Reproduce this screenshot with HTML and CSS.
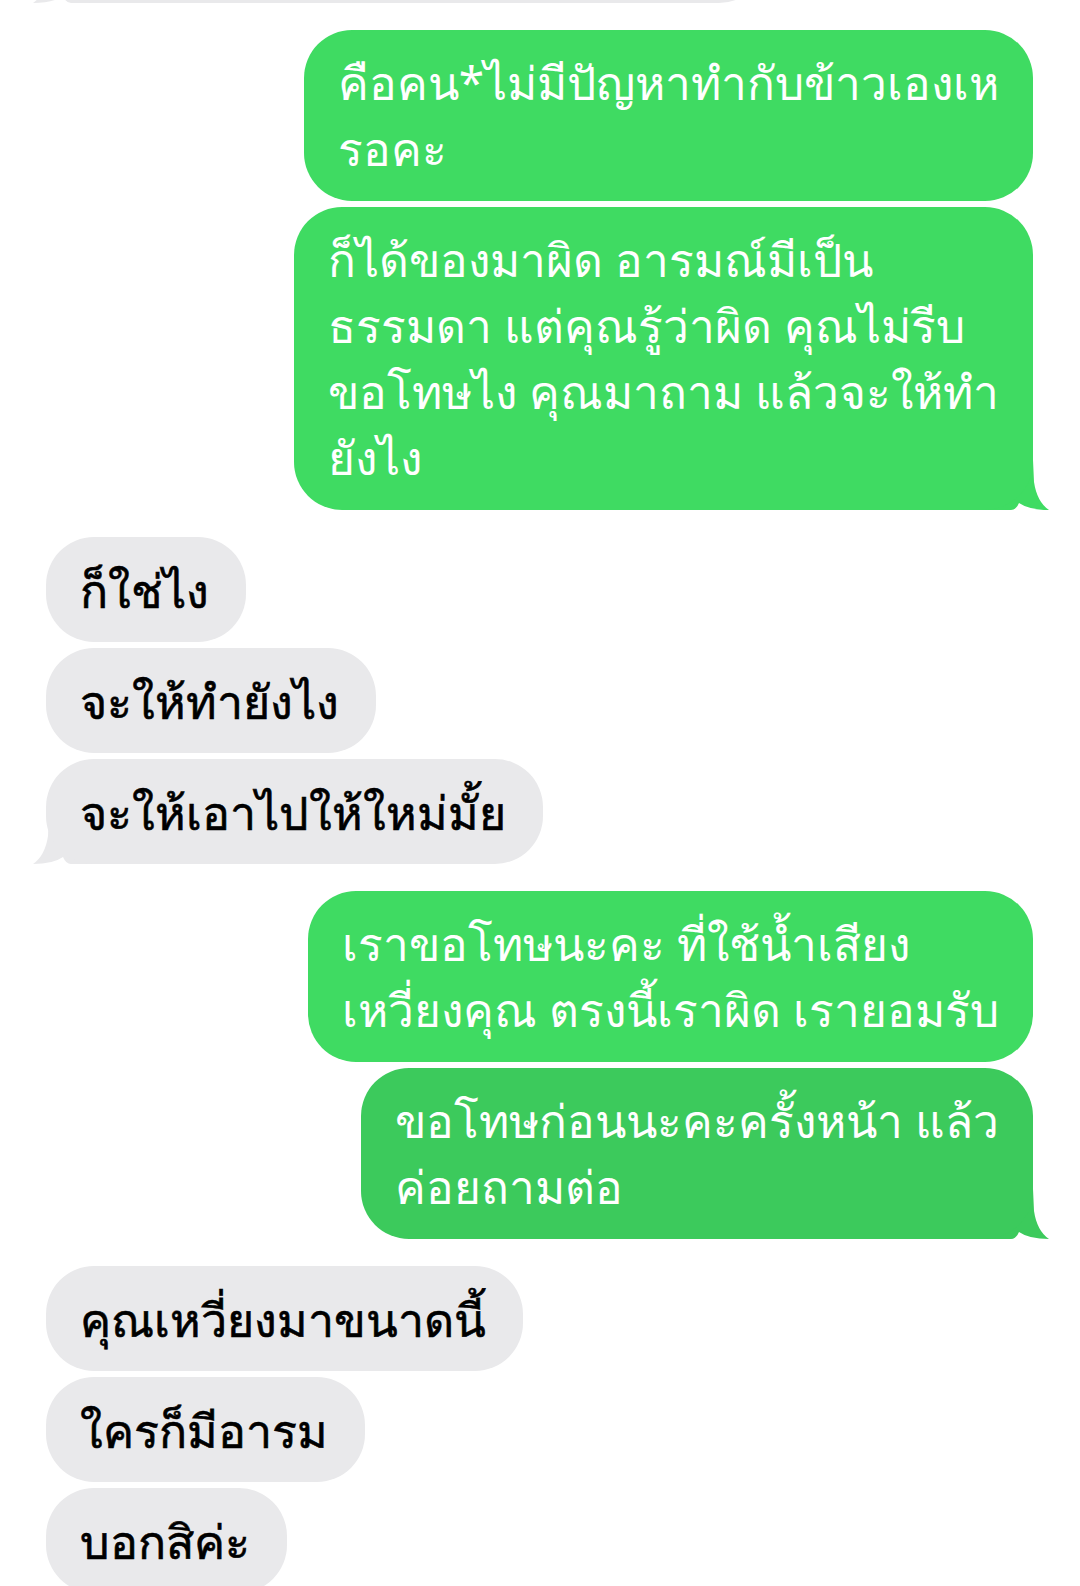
FILE: index.html
```html
<!DOCTYPE html>
<html lang="th">
<head>
    <meta charset="UTF-8">
    <meta name="viewport" content="width=device-width, initial-scale=1.0">
    <title>ข้อความ</title>
    <link rel="stylesheet" href="styles.css">
</head>
<body>
<div class="chat">
    <div class="row row-in">
        <div class="bubble in cut-off">&nbsp;
            <svg class="tail tail-in" viewBox="0 0 64 50"><path d="M64 50 L38 50 Q33 50 30 43 Q20 50 0 50 Q12 42 15 22 L16 0 L64 0 Z"/></svg>
        </div>
    </div>

    <div class="group">
        <div class="row row-out">
            <div class="bubble out">คือคน*ไม่มีปัญหาทำกับข้าวเองเห<br>รอคะ</div>
        </div>
        <div class="row row-out">
            <div class="bubble out">ก็ได้ของมาผิด อารมณ์มีเป็น<br>ธรรมดา แต่คุณรู้ว่าผิด คุณไม่รีบ<br>ขอโทษไง คุณมาถาม แล้วจะให้ทำ<br>ยังไง
                <svg class="tail tail-out" viewBox="0 0 64 50"><path d="M0 50 L26 50 Q31 50 34 43 Q44 50 64 50 Q52 42 49 22 L48 0 L0 0 Z"/></svg>
            </div>
        </div>
    </div>

    <div class="group">
        <div class="row row-in">
            <div class="bubble in">ก็ใช่ไง</div>
        </div>
        <div class="row row-in">
            <div class="bubble in">จะให้ทำยังไง</div>
        </div>
        <div class="row row-in">
            <div class="bubble in">จะให้เอาไปให้ใหม่มั้ย
                <svg class="tail tail-in" viewBox="0 0 64 50"><path d="M64 50 L38 50 Q33 50 30 43 Q20 50 0 50 Q12 42 15 22 L16 0 L64 0 Z"/></svg>
            </div>
        </div>
    </div>

    <div class="group">
        <div class="row row-out">
            <div class="bubble out">เราขอโทษนะคะ ที่ใช้น้ำเสียง<br>เหวี่ยงคุณ ตรงนี้เราผิด เรายอมรับ</div>
        </div>
        <div class="row row-out">
            <div class="bubble out dark">ขอโทษก่อนนะคะครั้งหน้า แล้ว<br>ค่อยถามต่อ
                <svg class="tail tail-out" viewBox="0 0 64 50"><path d="M0 50 L26 50 Q31 50 34 43 Q44 50 64 50 Q52 42 49 22 L48 0 L0 0 Z"/></svg>
            </div>
        </div>
    </div>

    <div class="group">
        <div class="row row-in">
            <div class="bubble in">คุณเหวี่ยงมาขนาดนี้</div>
        </div>
        <div class="row row-in">
            <div class="bubble in">ใครก็มีอารม</div>
        </div>
        <div class="row row-in">
            <div class="bubble in">บอกสิค่ะ</div>
        </div>
    </div>
</div>
</body>
</html>
```

FILE: styles.css
```css
body {
    margin: 0;
    padding: 0;
    background-color: #fff;
    font-family: "Noto Sans", "DejaVu Sans", sans-serif;
    overflow: hidden;
}
.chat {
    display: flex;
    flex-direction: column;
    gap: 27px;
    padding: 0 47px 0 46px;
}
.group {
    display: flex;
    flex-direction: column;
    gap: 6px;
}
.row {
    display: flex;
}
.row-out {
    justify-content: flex-end;
}
.row-in {
    justify-content: flex-start;
}
.bubble {
    position: relative;
    line-height: 66px;
    border-radius: 48px;
}
.out {
    font-size: 46px;
    padding: 19px 34px 20px 34px;
    background-color: #3fdb62;
    color: #fff;
    fill: #3fdb62;
}
.out.dark {
    background-color: #3cca5c;
    fill: #3cca5c;
}
.in {
    font-size: 46.5px;
    padding: 20px 37px 19px 34px;
    background-color: #e9e9eb;
    color: #000;
    fill: #e9e9eb;
    -webkit-text-stroke: 0.6px #000;
}
.cut-off {
    width: 650px;
    margin-top: -102px;
}
.tail {
    position: absolute;
    bottom: 0;
    width: 64px;
    height: 50px;
    z-index: -1;
}
.tail-out {
    right: -16px;
}
.tail-in {
    left: -13px;
}
```
